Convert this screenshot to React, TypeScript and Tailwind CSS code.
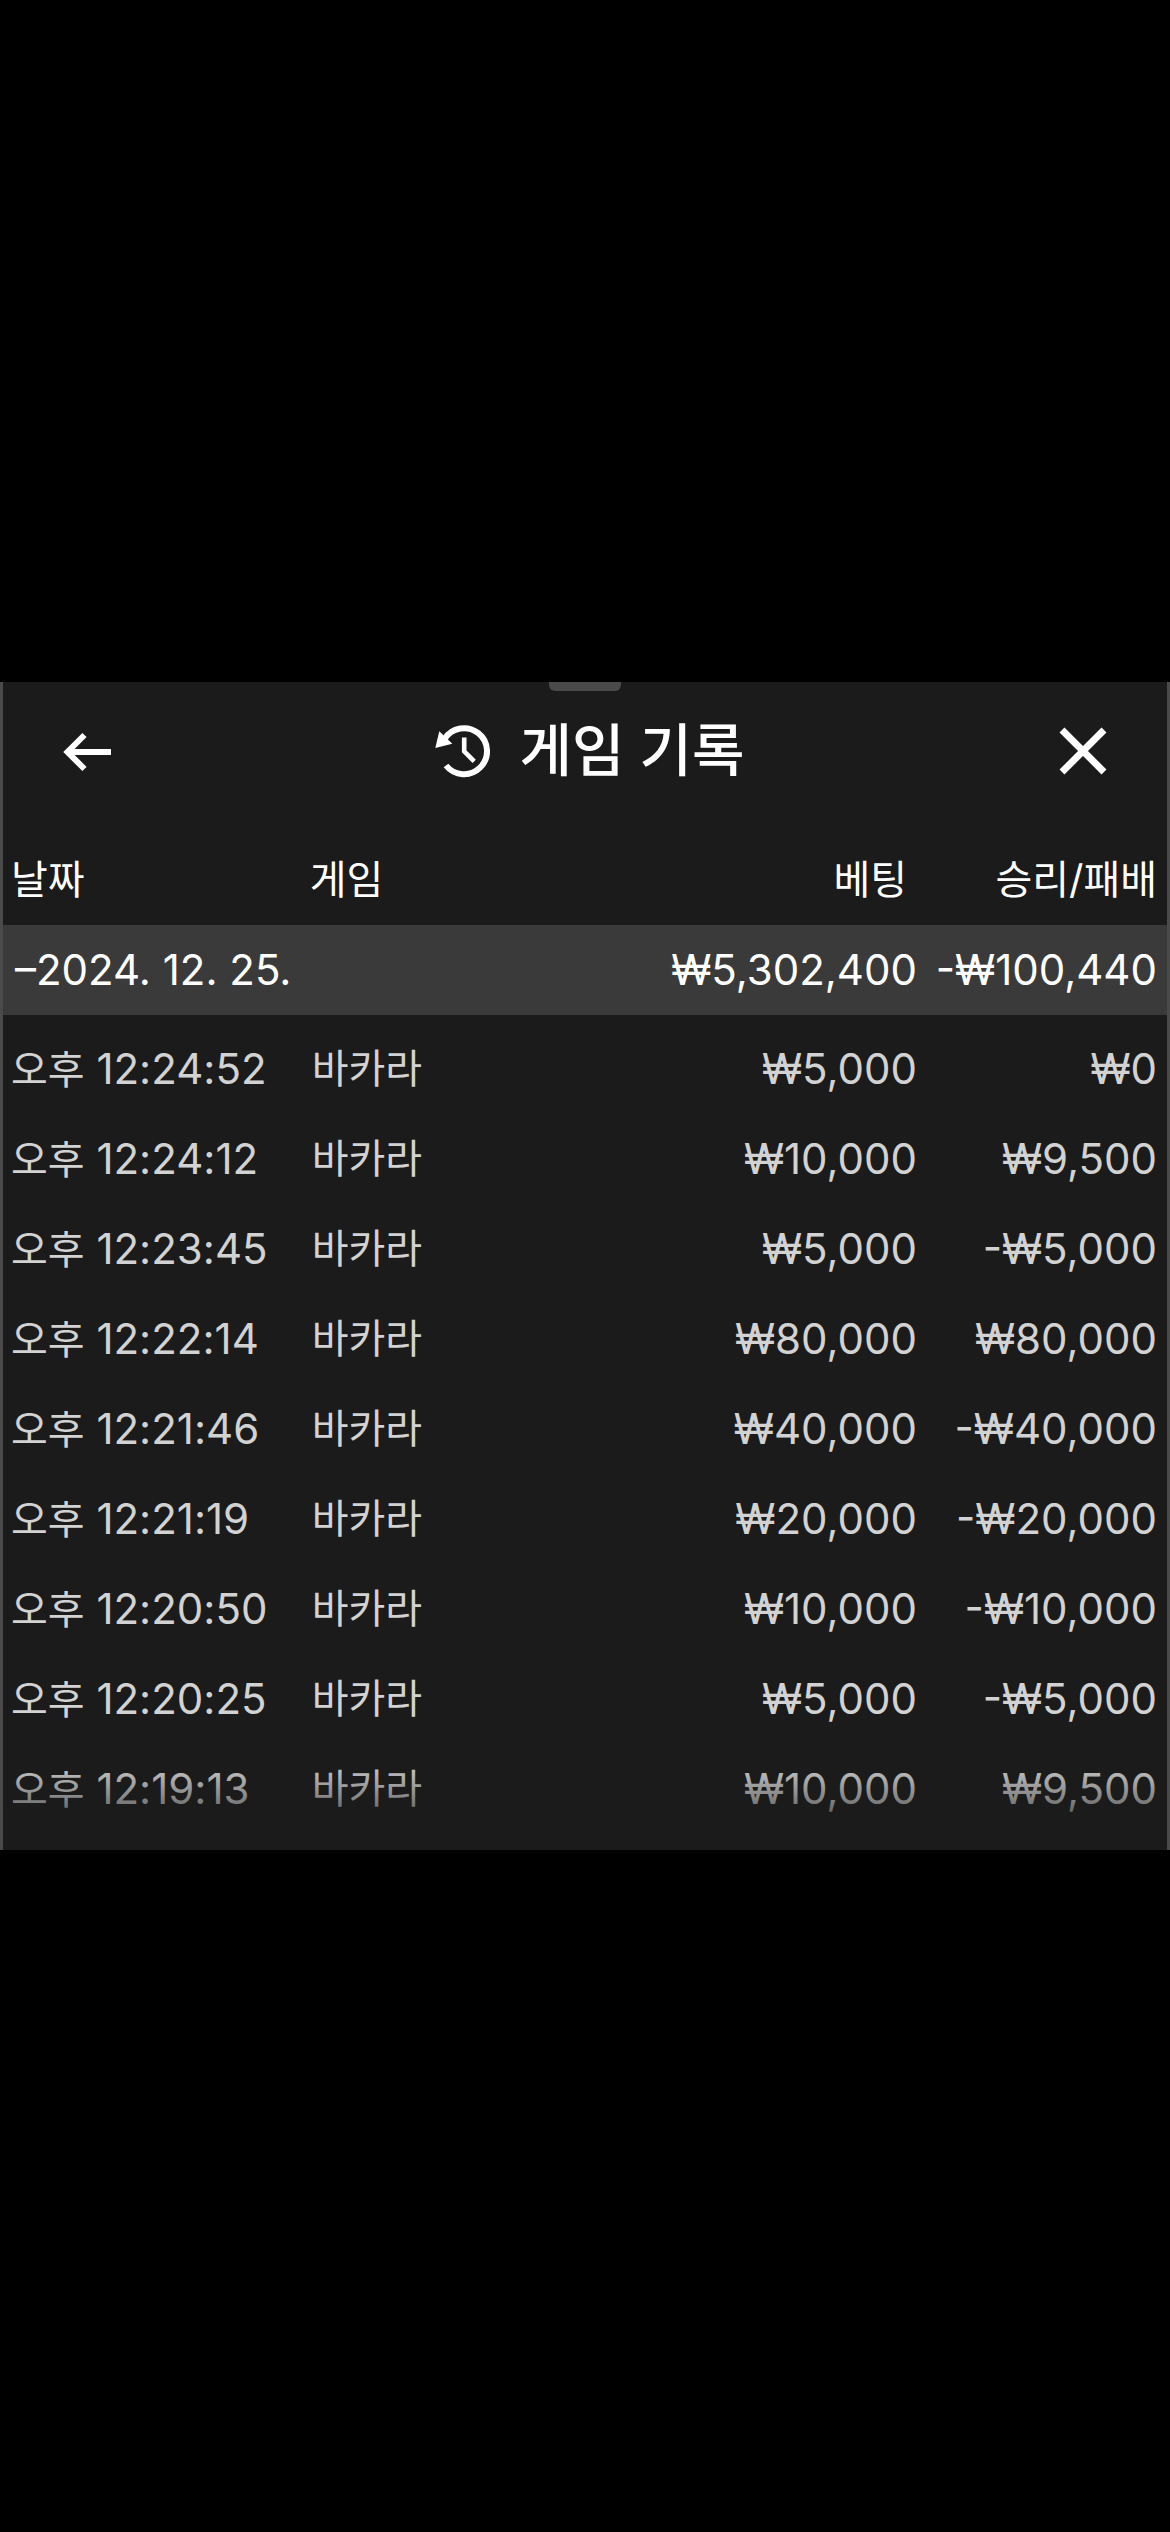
import {useState} from 'react';

type Round = {
    time: string;
    bet: string;
    result: string;
};

const rounds: Round[] = [
    {time: '12:24:52', bet: '₩5,000', result: '₩0'},
    {time: '12:24:12', bet: '₩10,000', result: '₩9,500'},
    {time: '12:23:45', bet: '₩5,000', result: '-₩5,000'},
    {time: '12:22:14', bet: '₩80,000', result: '₩80,000'},
    {time: '12:21:46', bet: '₩40,000', result: '-₩40,000'},
    {time: '12:21:19', bet: '₩20,000', result: '-₩20,000'},
    {time: '12:20:50', bet: '₩10,000', result: '-₩10,000'},
    {time: '12:20:25', bet: '₩5,000', result: '-₩5,000'},
    {time: '12:19:13', bet: '₩10,000', result: '₩9,500'},
];

function BackIcon() {
    return (
        <svg viewBox="0 0 48 48" className="size-12" fill="none" stroke="currentColor" strokeWidth="6">
            <path d="M48 25H4M21.500 8L4.500 25l17 17"/>
        </svg>
    );
}

function CloseIcon() {
    return (
        <svg viewBox="0 0 48 48" className="size-12" fill="none" stroke="currentColor" strokeWidth="7">
            <path d="M3 3l42 42M45 3L3 45"/>
        </svg>
    );
}

function HistoryIcon() {
    return (
        <svg viewBox="0 0 58 58" className="size-[58px]" fill="none" stroke="currentColor">
            <path d="M12 43.500A23 23 0 1 0 10.500 17" strokeWidth="6"/>
            <path d="M5.300 9.300L1.300 26l17-4.300z" fill="currentColor" stroke="none"/>
            <path d="M30.200 15.500v13.800l10 10" strokeWidth="4.600"/>
        </svg>
    );
}

export default function App() {
    const [open, setOpen] = useState(true);

    return (
        <main
            className="flex min-h-screen flex-col justify-center bg-black font-['Inter','Noto_Sans_CJK_KR',sans-serif] text-white">
            <section className="relative border-x-[3px] border-[#4a4a4a] bg-[#1b1b1b] pb-4">
                {/* Drag handle */}
                <div className="absolute top-0 left-1/2 h-[9px] w-[72px] -translate-x-1/2 rounded-b-md bg-[#4a4a4a]"></div>

                <header className="flex h-[134px] items-center justify-between px-[60px] pt-[3px]">
                    <button type="button" aria-label="뒤로">
                        <BackIcon/>
                    </button>
                    <h1 className="flex items-center gap-7 pl-2 text-[57px] leading-[80px] font-medium">
                        <HistoryIcon/>
                        게임 기록
                    </h1>
                    <button type="button" aria-label="닫기">
                        <CloseIcon/>
                    </button>
                </header>

                <table className="mt-[18px] w-full table-fixed text-[42px] leading-[50px]">
                    <thead className="text-[40px]">
                        <tr className="h-[91px]">
                            <th className="w-[26%] p-0 pl-2 text-left font-normal">날짜</th>
                            <th className="p-0 pl-1 text-left font-normal">게임</th>
                            <th className="w-[26%] p-0 pr-[10px] text-right font-normal">베팅</th>
                            <th className="w-[250px] p-0 pr-[10px] text-right font-normal">승리/패배</th>
                        </tr>
                    </thead>
                    <tbody>
                        <tr className="h-[90px] bg-[#3a3a3a]">
                            <td colSpan={2} className="p-0 pl-3">
                                <button type="button" aria-expanded={open} onClick={() => setOpen(!open)}>
                                    –2024. 12. 25.
                                </button>
                            </td>
                            <td className="p-0 text-right">₩5,302,400</td>
                            <td className="p-0 pr-[10px] text-right">-₩100,440</td>
                        </tr>
                    </tbody>
                    {open && (
                        <tbody className="text-[#d2d2d2]">
                            <tr className="h-[9px]" aria-hidden="true"></tr>
                            {rounds.map((round) => (
                                <tr key={round.time} className="h-[90px]">
                                    <td className="p-0 pl-2">
                                        <span className="text-[40px]">오후</span> {round.time}
                                    </td>
                                    <td className="p-0 pl-[6px] text-[40px]">바카라</td>
                                    <td className="p-0 text-right">{round.bet}</td>
                                    <td className="p-0 pr-[10px] text-right">{round.result}</td>
                                </tr>
                            ))}
                        </tbody>
                    )}
                </table>

                {/* Bottom fade */}
                <div
                    className="pointer-events-none absolute inset-x-0 bottom-0 h-[90px] bg-linear-to-b from-[#1b1b1b]/0 to-[#1b1b1b]"></div>
            </section>
        </main>
    );
}
